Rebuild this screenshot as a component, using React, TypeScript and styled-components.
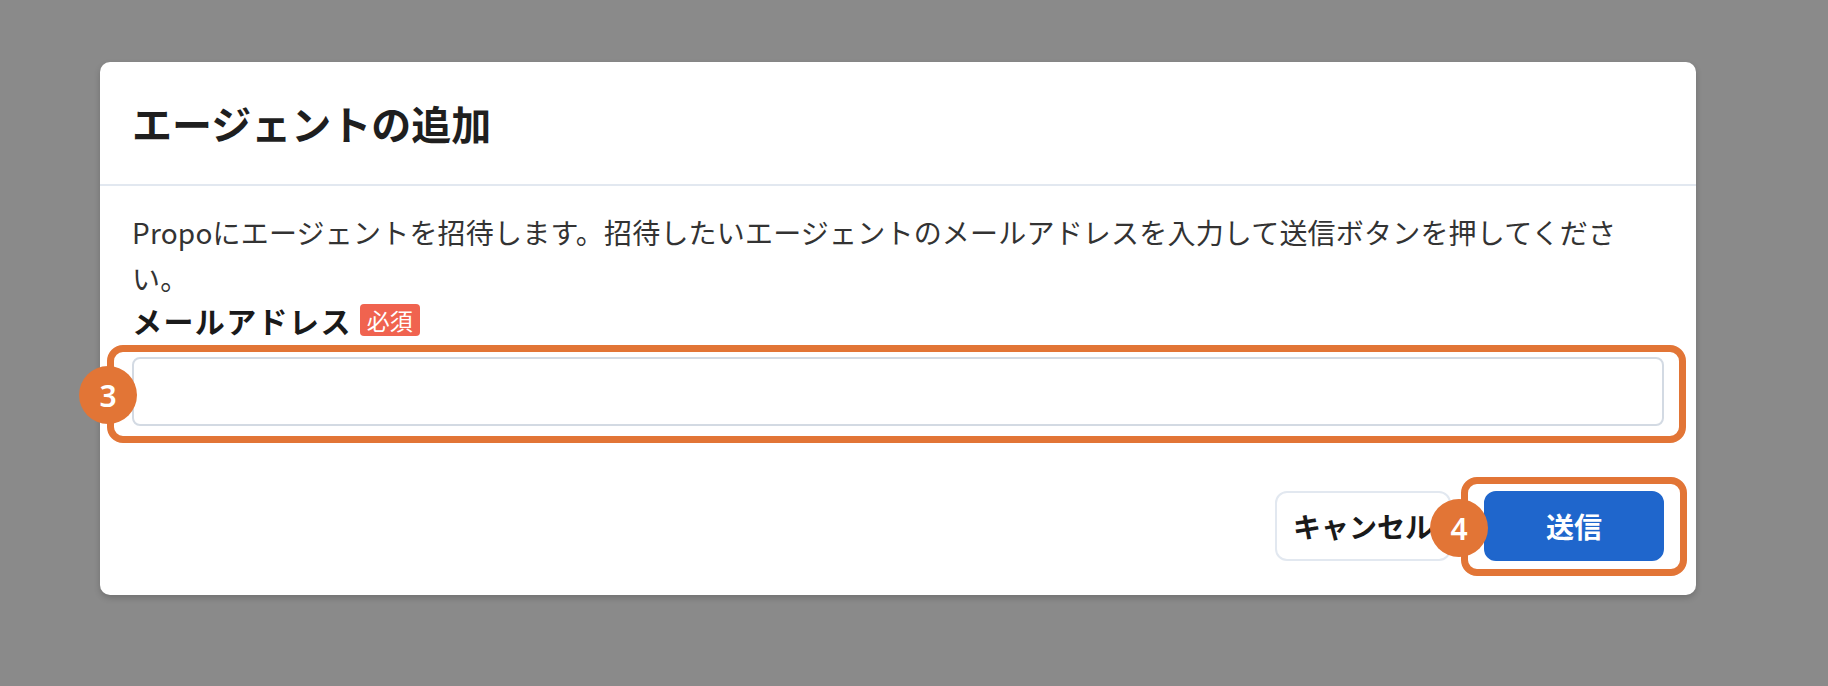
import styled, { createGlobalStyle } from "styled-components";

const GlobalStyle = createGlobalStyle`
  html, body {
    margin: 0;
    padding: 0;
    background: #8a8a8a;
  }
  body {
    font-family: "Noto Sans CJK JP", "Noto Sans", sans-serif;
    color: #1a202c;
  }
  * {
    box-sizing: border-box;
  }
`;

const Backdrop = styled.div`
  width: 1828px;
  height: 686px;
  padding: 62px 0 0 100px;
  background: #8a8a8a;
`;

const Modal = styled.section`
  width: 1596px;
  background: #ffffff;
  border-radius: 10px;
  box-shadow: 0 3px 6px rgba(0, 0, 0, 0.18);
`;

const Header = styled.header`
  padding: 35px 32px;
  border-bottom: 2px solid #e2e8f0;
`;

const Title = styled.h2`
  margin: 0;
  font-size: 40px;
  line-height: 52px;
  font-weight: 700;
  color: #1f1f1f;
`;

const Body = styled.div`
  padding: 23px 32px 0;
`;

const Description = styled.p`
  margin: 0;
  font-size: 28px;
  line-height: 46px;
  letter-spacing: 0.2px;
  color: #333333;
`;

const Label = styled.label`
  display: flex;
  align-items: center;
  gap: 8px;
  font-size: 30px;
  line-height: 38px;
  font-weight: 700;
  letter-spacing: 1.4px;
  color: #1a1a1a;
`;

const RequiredTag = styled.span`
  display: inline-flex;
  align-items: center;
  height: 32px;
  padding: 0 7px;
  border-radius: 4px;
  background: #f0634f;
  color: #ffffff;
  font-size: 23px;
  font-weight: 400;
  letter-spacing: 0;
`;

const Field = styled.div`
  position: relative;
  margin-top: 18px;
`;

const Input = styled.input`
  display: block;
  width: 100%;
  height: 69px;
  padding: 0 20px;
  border: 2px solid #d3dae3;
  border-radius: 8px;
  font-size: 28px;
  font-family: inherit;
  background: #ffffff;
  outline: none;
`;

const Footer = styled.footer`
  display: flex;
  justify-content: flex-end;
  gap: 33px;
  padding: 65px 32px 34px;
`;

const ButtonSlot = styled.div`
  position: relative;
`;

const Button = styled.button<{ $primary?: boolean }>`
  height: 70px;
  padding: ${(p) => (p.$primary ? "0 60px" : "0 16px")};
  border-radius: 12px;
  border: 2px solid ${(p) => (p.$primary ? "#1f66cc" : "#e2e8f0")};
  background: ${(p) => (p.$primary ? "#1f66cc" : "#ffffff")};
  color: ${(p) => (p.$primary ? "#ffffff" : "#1a1a1a")};
  font-family: inherit;
  font-size: 28px;
  font-weight: 700;
  cursor: pointer;
`;

const Highlight = styled.div<{ $top: number; $right: number; $bottom: number; $left: number }>`
  position: absolute;
  top: ${(p) => p.$top}px;
  right: ${(p) => p.$right}px;
  bottom: ${(p) => p.$bottom}px;
  left: ${(p) => p.$left}px;
  border: 7px solid #e27536;
  border-radius: 16px;
  pointer-events: none;
`;

const StepBadge = styled.div<{ $top: number; $left: number }>`
  position: absolute;
  top: ${(p) => p.$top}px;
  left: ${(p) => p.$left}px;
  width: 58px;
  height: 58px;
  border-radius: 50%;
  background: #e27536;
  color: #ffffff;
  display: flex;
  align-items: center;
  justify-content: center;
  font-family: "Noto Sans", sans-serif;
  font-size: 30px;
  font-weight: 600;
  z-index: 2;
`;

export default function App() {
  return (
    <>
      <GlobalStyle />
      <Backdrop>
        <Modal>
          <Header>
            <Title>エージェントの追加</Title>
          </Header>
          <Body>
            <Description>
              Propoにエージェントを招待します。招待したいエージェントのメールアドレスを入力して送信ボタンを押してください。
            </Description>
            <Label htmlFor="agent-email">
              メールアドレス
              <RequiredTag>必須</RequiredTag>
            </Label>
            <Field>
              <Input id="agent-email" type="email" />
              <Highlight $top={-12} $right={-22} $bottom={-17} $left={-25} />
              <StepBadge $top={9} $left={-53}>3</StepBadge>
            </Field>
          </Body>
          <Footer>
            <Button type="button">キャンセル</Button>
            <ButtonSlot>
              <Button type="button" $primary>
                送信
              </Button>
              <Highlight $top={-14} $right={-23} $bottom={-15} $left={-23} />
              <StepBadge $top={8} $left={-54}>4</StepBadge>
            </ButtonSlot>
          </Footer>
        </Modal>
      </Backdrop>
    </>
  );
}
